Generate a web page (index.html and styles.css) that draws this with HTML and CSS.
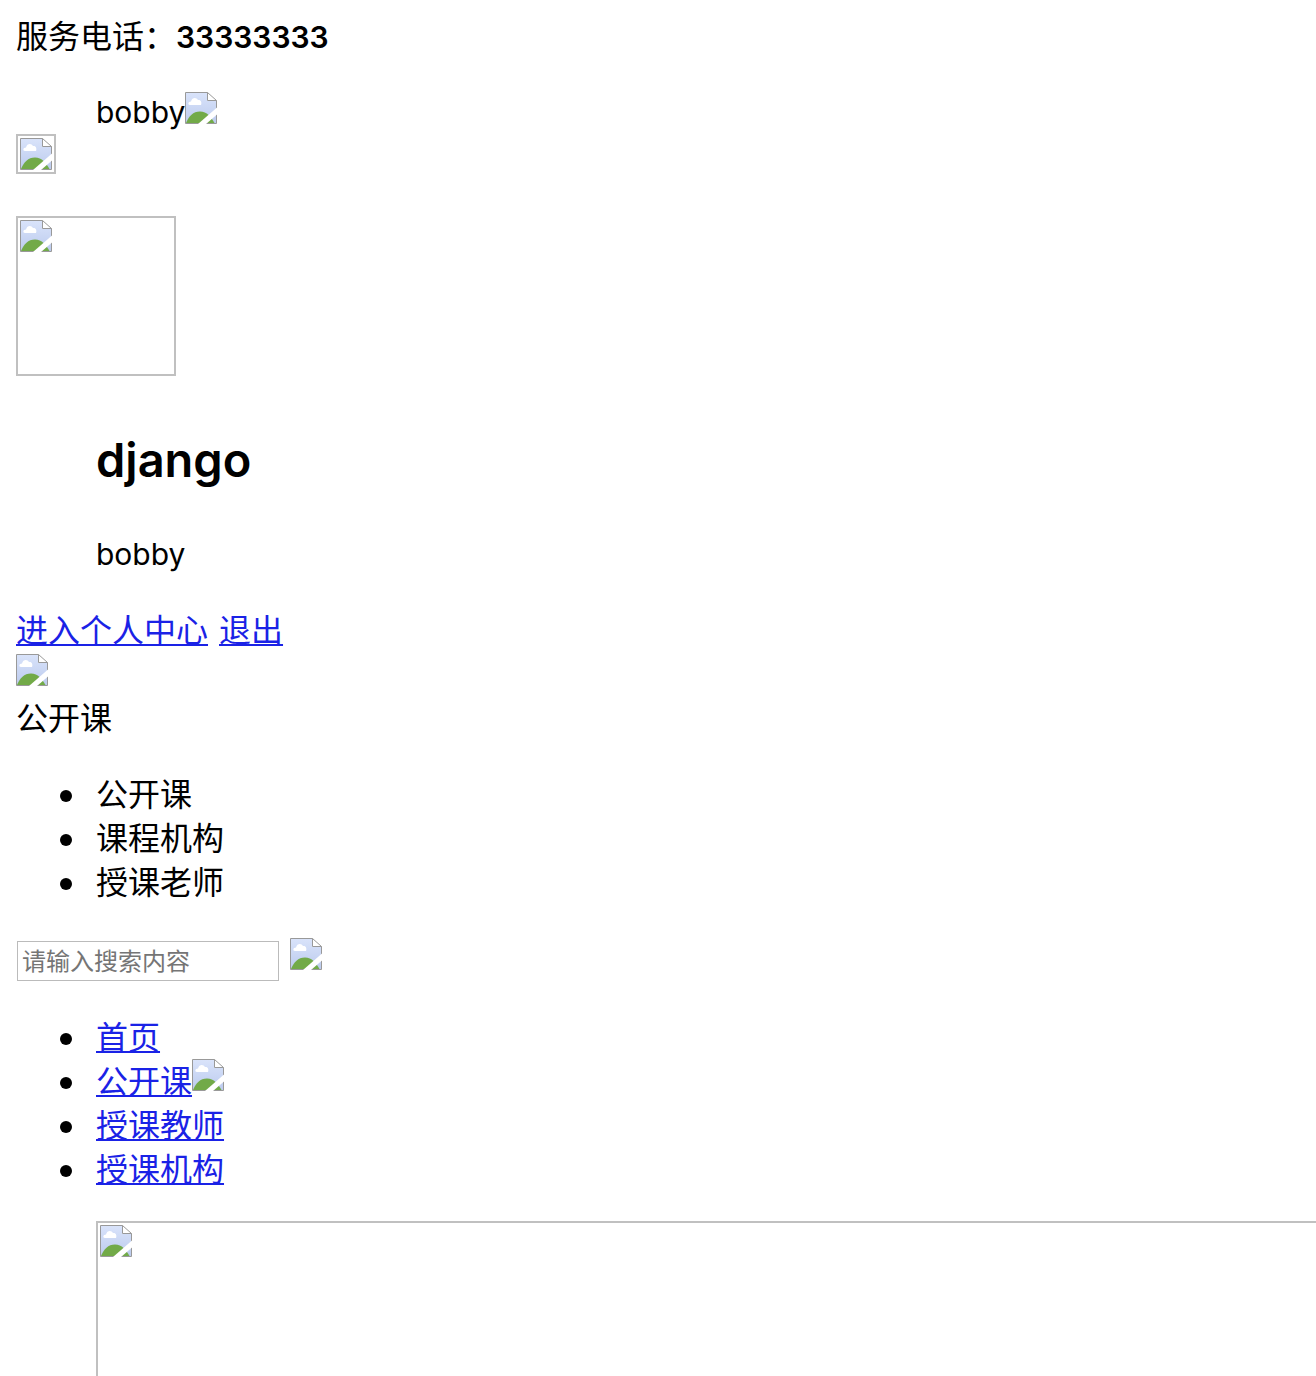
FILE: index.html
```html
<!DOCTYPE html>
<html lang="zh-CN">
<head>
<meta charset="utf-8">
<title>公开课</title>
<link rel="stylesheet" href="styles.css">
</head>
<body>
<svg class="defs" aria-hidden="true">
  <defs>
    <linearGradient id="sky" x1="0" y1="0" x2="0" y2="1">
      <stop offset="0" stop-color="#d9e3fa"/>
      <stop offset="1" stop-color="#bccbee"/>
    </linearGradient>
    <symbol id="picture" viewBox="0 0 32 32">
      <path fill="url(#sky)" d="M1 1H22V9H31V31H1Z"/>
      <path fill="#fff" d="M5 13C2.500 13 3 9.500 6 9.500C7 5 11.500 5 13 8C16 7.500 17 10.500 16 13Z"/>
      <path fill="#72aa48" d="M1 31C4 24 8 19.500 15 19.500C22 19.500 26 25 29.500 31Z"/>
      <path fill="#fff" d="M22 1L31 9H22Z"/>
      <path fill="none" stroke="#999" d="M31.500 31.500H.5V.5H22.500L31.500 8.500V31.500M22.500 .5V8.500H31.500"/>
      <path fill="#fff" d="M32 15.500V22.500L21 32H13Z"/>
    </symbol>
  </defs>
</svg>
<header>
  <p class="line">服务电话：<b class="phone">33333333</b></p>
  <div class="user latin">bobby<svg class="icon"><use href="#picture"/></svg></div>
  <div class="frame frame-small"><svg class="icon"><use href="#picture"/></svg></div>
  <div class="frame frame-avatar"><svg class="icon"><use href="#picture"/></svg></div>
  <h2 class="name">django</h2>
  <p class="nick latin">bobby</p>
  <div class="account"><a href="#center">进入个人中心</a><a href="#logout">退出</a></div>
  <svg class="icon logo"><use href="#picture"/></svg>
</header>
<p class="line">公开课</p>
<ul class="list">
  <li>公开课</li>
  <li>课程机构</li>
  <li>授课老师</li>
</ul>
<form class="search">
  <input class="search-input" type="text" placeholder="请输入搜索内容" aria-label="请输入搜索内容">
  <svg class="icon"><use href="#picture"/></svg>
</form>
<nav>
  <ul class="list">
    <li><a href="#home">首页</a></li>
    <li><a href="#open">公开课</a><svg class="icon"><use href="#picture"/></svg></li>
    <li><a href="#teachers">授课教师</a></li>
    <li><a href="#orgs">授课机构</a></li>
  </ul>
</nav>
<div class="banner"><svg class="icon"><use href="#picture"/></svg></div>
</body>
</html>
```
FILE: styles.css
```css
* {
  box-sizing: border-box;
}

body {
  display: flex;
  flex-direction: column;
  min-height: 100vh;
  margin: 0;
  padding: 12px 0 0 16px;
  background: #fff;
  color: #000;
  font-family: "Noto Sans CJK SC", sans-serif;
  font-size: 32px;
  line-height: 44px;
}

a {
  color: #1a22e6;
  text-decoration: underline;
  text-decoration-thickness: 2px;
  text-underline-offset: 2px;
  text-decoration-skip-ink: none;
}

.defs {
  position: absolute;
  width: 0;
  height: 0;
}

.icon {
  flex: none;
  width: 32px;
  height: 32px;
}

.line {
  margin: 0;
}

.latin {
  font-family: Inter, sans-serif;
  font-size: 30px;
  line-height: 40px;
}

.phone {
  font-family: Inter, sans-serif;
  font-size: 30px;
  font-weight: 600;
}

.user {
  display: flex;
  align-items: flex-start;
  margin: 33px 0 2px 80px;
}

.frame {
  display: flex;
  align-items: flex-start;
  padding: 2px;
  border: 2px solid #c0c0c0;
}

.frame-small {
  width: 40px;
  height: 40px;
}

.frame-avatar {
  width: 160px;
  height: 160px;
  margin-top: 42px;
}

.name {
  margin: 52px 0 0 80px;
  font-family: Inter, sans-serif;
  font-size: 47px;
  font-weight: 600;
  line-height: 64px;
}

.nick {
  margin: 42px 0 32px 80px;
}

.account {
  display: flex;
  gap: 11px;
}

.logo {
  display: block;
  margin: 4px 0 8px;
}

.list {
  margin: 32px 0;
  padding-left: 44px;
  list-style: none;
}

.list li {
  display: flex;
  align-items: center;
}

.list li::before {
  content: "";
  width: 12px;
  height: 12px;
  margin: 8px 24px 0 0;
  border-radius: 50%;
  background: #000;
}

.list .icon {
  align-self: flex-start;
  margin-top: 2px;
}

.search {
  display: flex;
  align-items: flex-start;
  gap: 11px;
  padding: 4px 0 0 1px;
}

.search-input {
  width: 262px;
  height: 40px;
  margin-top: 3px;
  padding: 0 4px 4px;
  border: 1px solid #bbb;
  font-family: inherit;
  font-size: 24px;
}

.search-input::placeholder {
  color: #757575;
}

.banner {
  display: flex;
  align-items: flex-start;
  flex: 1 0 152px;
  margin-left: 80px;
  padding: 2px;
  border: solid #c0c0c0;
  border-width: 2px 0 0 2px;
}
```
